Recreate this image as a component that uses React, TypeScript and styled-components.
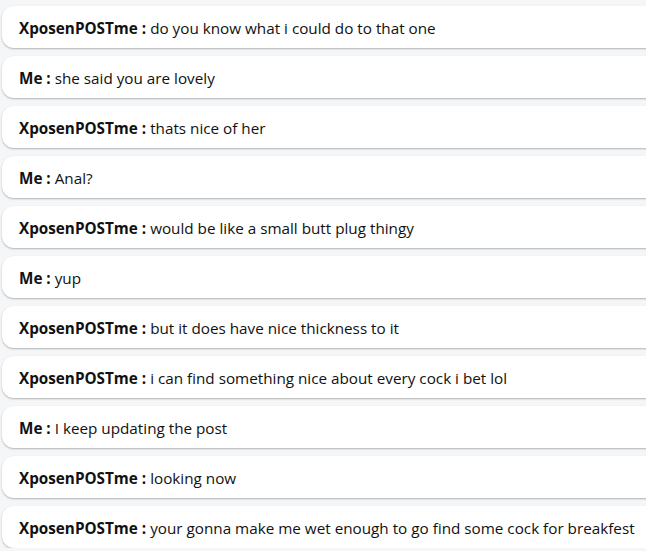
import React from "react";
import styled, { createGlobalStyle } from "styled-components";

const GlobalStyle = createGlobalStyle`
  html, body {
    margin: 0;
    padding: 0;
    background: #f5f6f8;
    overflow: hidden;
  }
`;

const Feed = styled.div`
  display: flex;
  flex-direction: column;
  gap: 8px;
  padding: 6px 0 0 2px;
  width: calc(100% + 20px);
  font-family: "Open Sans", "Noto Sans", sans-serif;
`;

const Message = styled.div`
  display: flex;
  align-items: center;
  height: 42px;
  box-sizing: border-box;
  padding: 2px 0 0 17px;
  background: #ffffff;
  border-radius: 12px;
  box-shadow: 0 1px 2px rgba(0, 0, 0, 0.28);
  font-size: 15.25px;
  color: #111;
  white-space: nowrap;
`;

const Sender = styled.b`
  font-weight: 700;
  margin-right: 4px;
`;

const messages: [string, string][] = [
  ["XposenPOSTme", "do you know what i could do to that one"],
  ["Me", "she said you are lovely"],
  ["XposenPOSTme", "thats nice of her"],
  ["Me", "Anal?"],
  ["XposenPOSTme", "would be like a small butt plug thingy"],
  ["Me", "yup"],
  ["XposenPOSTme", "but it does have nice thickness to it"],
  ["XposenPOSTme", "i can find something nice about every cock i bet lol"],
  ["Me", "I keep updating the post"],
  ["XposenPOSTme", "looking now"],
  ["XposenPOSTme", "your gonna make me wet enough to go find some cock for breakfest"],
];

export default function App() {
  return (
    <>
      <GlobalStyle />
      <Feed>
        {messages.map(([who, text], i) => (
          <Message key={i}>
            <Sender>{who} :</Sender>
            {text}
          </Message>
        ))}
      </Feed>
    </>
  );
}
